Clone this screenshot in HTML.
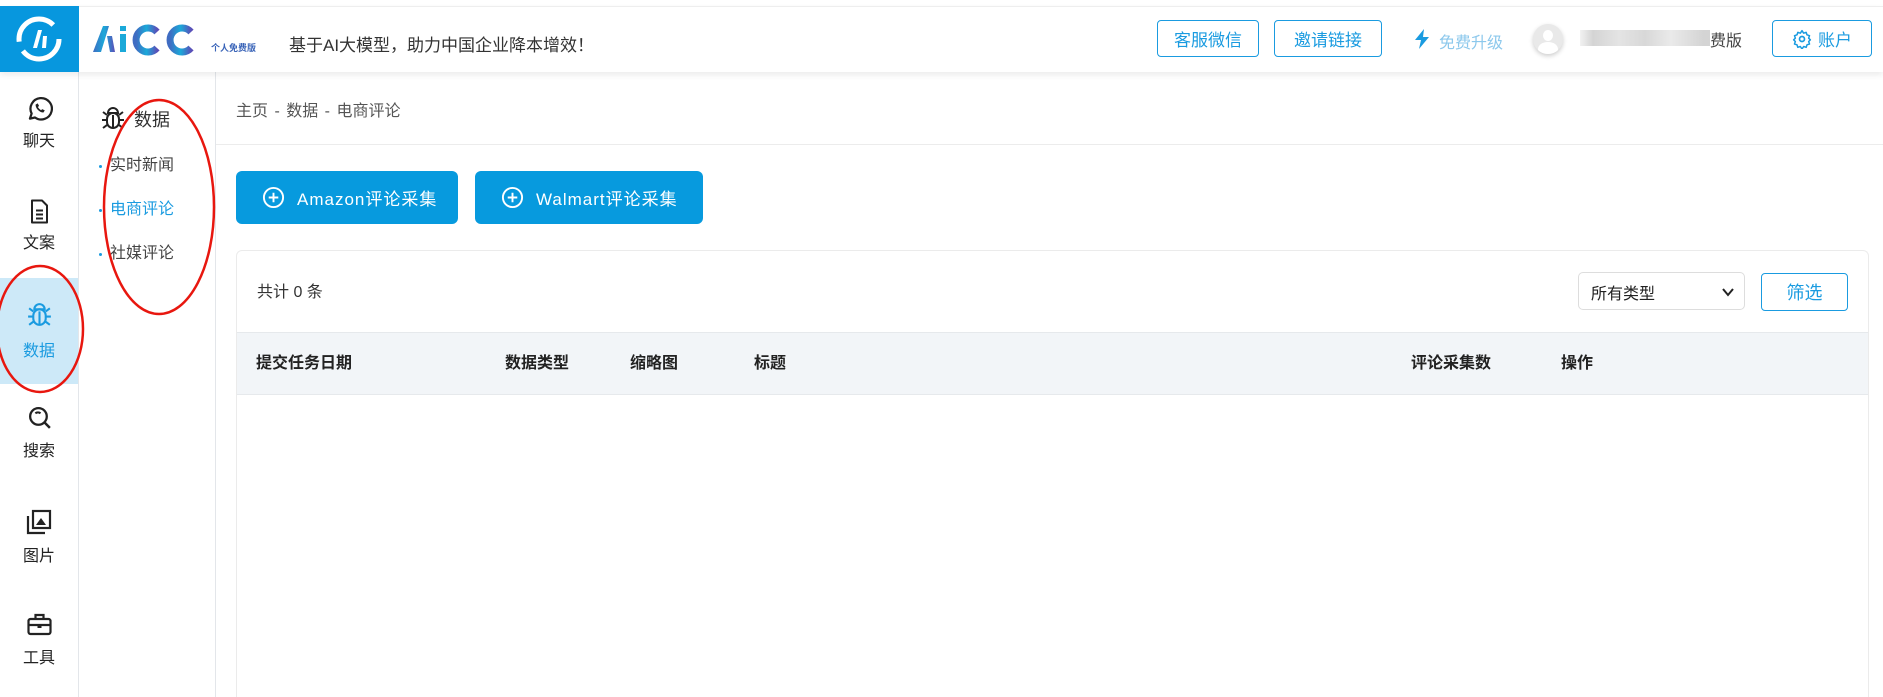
<!DOCTYPE html>
<html><head><meta charset="utf-8"><style>
*{box-sizing:border-box;margin:0;padding:0}
html,body{width:1883px;height:697px;overflow:hidden}
body{background:#fff;font-family:"Liberation Sans","Noto Sans CJK SC",sans-serif;color:#333;position:relative}
.abs{position:absolute}
.hdr{left:0;top:6px;width:1883px;height:66px;background:#fff;box-shadow:0 3px 6px rgba(0,0,0,.08);z-index:2;border-top:1px solid #eee}
.logo{left:0;top:6px;width:79px;height:66px;background:#0797de;z-index:3}
.hbtn{top:20px;height:37px;border:1px solid #1a9be0;border-radius:4px;color:#1a9be0;font-size:17px;display:flex;align-items:center;justify-content:center;background:#fff}
.side{left:0;top:72px;width:79px;height:625px;border-right:1px solid #e3e6ea}
.sub{left:79px;top:72px;width:137px;height:625px;border-right:1px solid #e3e6ea}
.si{left:0;width:78px;text-align:center;font-size:16px;color:#222;line-height:20px}
.mi{left:101px;font-size:16px;color:#444;line-height:20px}
.mi:before{content:"";position:absolute;left:-2px;top:9px;width:3px;height:3px;background:#1a9be0;border-radius:50%}
.mi span{margin-left:9px}
.pbtn{top:171px;height:53px;background:#079ade;border-radius:6px;color:#fff;font-size:17px;letter-spacing:1px;display:flex;align-items:center;padding-left:26px}
.pbtn svg{margin-right:12px}
.th{top:361px;font-size:16px;font-weight:bold;color:#222;transform:translateY(-50%)}
</style></head><body>
<div class="abs hdr"></div>
<div class="abs logo">
<svg width="79" height="66" viewBox="0 0 79 66"><circle cx="39" cy="33" r="20" fill="none" stroke="#fff" stroke-width="5" stroke-dasharray="50 10 50 16"/><path d="M33 42 L38 24 L42 24 L37 42Z M43 30 L47 30 L46 42 L42 42Z" fill="#fff"/></svg></div>
<div class="abs" style="left:91px;top:22px;z-index:3">
<svg width="115" height="34" viewBox="0 0 115 34"><defs><linearGradient id="g" x1="0" x2="1"><stop offset="0" stop-color="#3f6cc2"/><stop offset=".5" stop-color="#1ba9d9"/><stop offset="1" stop-color="#5a4fb8"/></linearGradient></defs>
<path d="M2 30 L12 4 L18 4 L10 30Z M16 14 L21 14 L24 30 L19 30Z" fill="url(#g)"/><rect x="29" y="4" width="6" height="5" fill="#1ba9d9"/><rect x="29" y="12" width="6" height="18" fill="#1ba9d9"/>
<path d="M66 10 A12 12 0 1 0 66 26" fill="none" stroke="url(#g)" stroke-width="7"/><path d="M100 10 A12 12 0 1 0 100 26" fill="none" stroke="url(#g)" stroke-width="7"/></svg></div>
<div class="abs" style="left:211px;top:41px;font-size:9px;color:#3a64b8;font-weight:bold;z-index:3">个人免费版</div>
<div class="abs" style="left:289px;top:31px;font-size:17px;color:#333;z-index:3">基于AI大模型，助力中国企业降本增效！</div>
<div class="abs hbtn" style="left:1157px;width:102px;z-index:3">客服微信</div>
<div class="abs hbtn" style="left:1274px;width:108px;z-index:3">邀请链接</div>
<div class="abs" style="left:1413px;top:29px;z-index:3"><svg width="18" height="20" viewBox="0 0 18 20"><path d="M11 0 L2 11 L8 11 L6 20 L16 8 L10 8Z" fill="#1a9be0"/></svg></div>
<div class="abs" style="left:1439px;top:29px;font-size:16px;color:#8cc8ec;z-index:3">免费升级</div>
<div class="abs" style="left:1533px;top:24px;width:30px;height:30px;border-radius:50%;background:#e9e9e9;box-shadow:0 2px 5px rgba(0,0,0,.2);z-index:3;overflow:hidden"><div class="abs" style="left:10px;top:6px;width:10px;height:11px;border-radius:50%;background:#fff"></div><div class="abs" style="left:5px;top:18px;width:20px;height:14px;border-radius:50%;background:#fff"></div></div>
<div class="abs" style="left:1580px;top:30px;width:130px;height:16px;background:linear-gradient(90deg,#f2f2f2,#d4d4d4 10%,#e4e4e4 30%,#d8d8d8 50%,#eaeaea 70%,#d4d4d4 95%);z-index:3"></div>
<div class="abs" style="left:1710px;top:27px;font-size:16px;color:#444;z-index:3">费版</div>
<div class="abs hbtn" style="left:1772px;width:100px;z-index:3"><svg width="20" height="20" viewBox="0 0 24 24" style="margin-right:6px"><circle cx="12" cy="12" r="3" fill="none" stroke="#1a9be0" stroke-width="2"/><path d="M12 2l2 3 3-1 1 3 3 1-1 3 2 2-2 2 1 3-3 1-1 3-3-1-2 3-2-3-3 1-1-3-3-1 1-3-2-2 2-2-1-3 3-1 1-3 3 1z" fill="none" stroke="#1a9be0" stroke-width="1.8" stroke-linejoin="round"/></svg>账户</div>

<div class="abs side"></div>
<div class="abs" style="left:0;top:278px;width:78px;height:106px;background:#cde9f8"></div>
<div class="abs si" style="top:95px"><svg width="27" height="27" viewBox="0 0 24 24"><path d="M3.5 21l1.5-4.5A9.5 9.5 0 1 1 8 20z" fill="none" stroke="#222" stroke-width="2" stroke-linejoin="round"/><path d="M8.5 8.5c0 3.5 3.5 7 7 7l1.2-1.8-2.3-1.2-1 1c-1.2-.6-2.300-1.7-2.8-2.8l1-1-1.2-2.3z" fill="#222"/></svg></div>
<div class="abs si" style="top:132px">聊天</div>
<div class="abs si" style="top:198px"><svg width="24" height="27" viewBox="0 0 24 26"><path d="M5 2h10l5 5v17H5z" fill="none" stroke="#222" stroke-width="2" stroke-linejoin="round"/><path d="M9 12h7M9 16h7M9 20h7" stroke="#222" stroke-width="2"/></svg></div>
<div class="abs si" style="top:234px">文案</div>
<div class="abs si" style="top:300px"><svg width="27" height="29" viewBox="0 0 26 28"><g fill="none" stroke="#1a9be0" stroke-width="2"><path d="M8 9a5 5 0 0 1 10 0z"/><rect x="7" y="9" width="12" height="15" rx="6"/><path d="M13 11v13M2 16h5M19 16h5M3 24l4-3M23 24l-4-3M3 8l4 3M23 8l-4 3"/></g></svg></div>
<div class="abs si" style="top:342px;color:#1a9be0">数据</div>
<div class="abs si" style="top:405px"><svg width="25" height="27" viewBox="0 0 24 26"><circle cx="11" cy="11" r="8" fill="none" stroke="#222" stroke-width="2.2"/><path d="M17 17l5 5" stroke="#222" stroke-width="2.4"/><path d="M8 8a4 4 0 0 1 5 0" stroke="#222" stroke-width="2" fill="none"/></svg></div>
<div class="abs si" style="top:442px">搜索</div>
<div class="abs si" style="top:509px"><svg width="26" height="26" viewBox="0 0 26 26"><rect x="7" y="2" width="17" height="17" fill="none" stroke="#222" stroke-width="2.2"/><path d="M2 7v17h17" fill="none" stroke="#222" stroke-width="2.2"/><path d="M10 16l5-7 5 7z" fill="#222"/></svg></div>
<div class="abs si" style="top:547px">图片</div>
<div class="abs si" style="top:612px"><svg width="27" height="26" viewBox="0 0 26 26"><rect x="2" y="7" width="22" height="15" rx="2" fill="none" stroke="#222" stroke-width="2.2"/><path d="M9 7V3h8v4M2 13h22" fill="none" stroke="#222" stroke-width="2.2"/><rect x="11" y="12" width="4" height="4" fill="#222"/></svg></div>
<div class="abs si" style="top:649px">工具</div>

<div class="abs sub"></div>
<div class="abs" style="left:100px;top:104px"><svg width="26" height="28" viewBox="0 0 26 28"><g fill="none" stroke="#222" stroke-width="2"><path d="M8 9a5 5 0 0 1 10 0z"/><rect x="7" y="9" width="12" height="15" rx="6"/><path d="M13 11v13M2 16h5M19 16h5M3 24l4-3M23 24l-4-3M3 8l4 3M23 8l-4 3"/></g></svg></div>
<div class="abs" style="left:134px;top:106px;font-size:18px;color:#333">数据</div>
<div class="abs mi" style="top:156px"><span>实时新闻</span></div>
<div class="abs mi" style="top:200px;color:#1a9be0"><span>电商评论</span></div>
<div class="abs mi" style="top:244px"><span>社媒评论</span></div>

<div class="abs" style="left:236px;top:97px;font-size:16px;color:#555;word-spacing:2px">主页 - 数据 - 电商评论</div>
<div class="abs" style="left:216px;top:144px;width:1667px;height:1px;background:#ececec"></div>
<div class="abs pbtn" style="left:236px;width:222px"><svg width="23" height="23" viewBox="0 0 24 24"><circle cx="12" cy="12" r="10" fill="none" stroke="#fff" stroke-width="2"/><path d="M12 7v10M7 12h10" stroke="#fff" stroke-width="2"/></svg>Amazon评论采集</div>
<div class="abs pbtn" style="left:475px;width:228px"><svg width="23" height="23" viewBox="0 0 24 24"><circle cx="12" cy="12" r="10" fill="none" stroke="#fff" stroke-width="2"/><path d="M12 7v10M7 12h10" stroke="#fff" stroke-width="2"/></svg>Walmart评论采集</div>

<div class="abs" style="left:236px;top:250px;width:1633px;height:447px;border:1px solid #ebebeb;border-bottom:none;border-radius:6px 6px 0 0"></div>
<div class="abs" style="left:257px;top:278px;font-size:16px;color:#333">共计 0 条</div>
<div class="abs" style="left:1578px;top:272px;width:167px;height:38px;border:1px solid #ddd;border-radius:5px;font-size:16px;color:#222;padding:7px 0 0 12px">所有类型<svg class="abs" style="right:10px;top:15px" width="12" height="9" viewBox="0 0 12 9"><path d="M1 1l5 6 5-6" fill="none" stroke="#222" stroke-width="2"/></svg></div>
<div class="abs hbtn" style="left:1761px;top:273px;width:87px;height:38px;font-size:18px">筛选</div>
<div class="abs" style="left:237px;top:332px;width:1631px;height:63px;background:#f2f5f8;border-top:1px solid #e6e9ec;border-bottom:1px solid #e6e9ec"></div>
<div class="abs th" style="left:256px">提交任务日期</div>
<div class="abs th" style="left:505px">数据类型</div>
<div class="abs th" style="left:630px">缩略图</div>
<div class="abs th" style="left:754px">标题</div>
<div class="abs th" style="left:1411px">评论采集数</div>
<div class="abs th" style="left:1561px">操作</div>

<svg class="abs" style="left:0;top:0;z-index:5" width="300" height="420" viewBox="0 0 300 420"><ellipse cx="40" cy="329" rx="43" ry="63" fill="none" stroke="#e8170f" stroke-width="2.5"/><ellipse cx="159" cy="207" rx="55" ry="107" fill="none" stroke="#e8170f" stroke-width="2.5"/></svg>
</body></html>
